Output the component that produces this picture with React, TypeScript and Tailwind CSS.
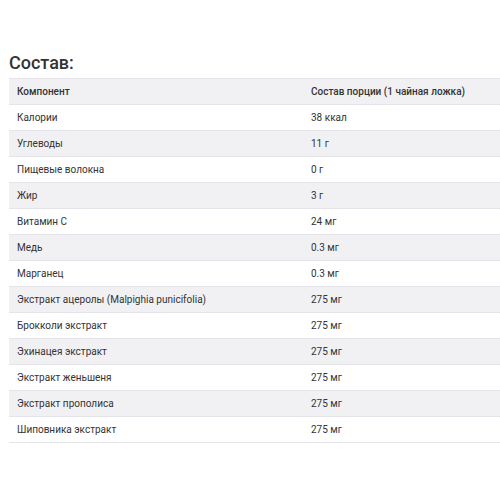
const rows: [string, string][] = [
  ['Калории', '38 ккал'],
  ['Углеводы', '11 г'],
  ['Пищевые волокна', '0 г'],
  ['Жир', '3 г'],
  ['Витамин С', '24 мг'],
  ['Медь', '0.3 мг'],
  ['Марганец', '0.3 мг'],
  ['Экстракт ацеролы (Malpighia punicifolia)', '275 мг'],
  ['Брокколи экстракт', '275 мг'],
  ['Эхинацея экстракт', '275 мг'],
  ['Экстракт женьшеня', '275 мг'],
  ['Экстракт прополиса', '275 мг'],
  ['Шиповника экстракт', '275 мг'],
]

export default function App() {
  return (
    <div className="w-[500px] h-[500px] bg-white overflow-hidden pl-[9px] pt-[51px] font-['Roboto',sans-serif] text-[#333]">
      <h2 className="text-[18px] leading-[24px] font-medium text-[#333] mb-[3px]">Состав:</h2>
      <table className="w-[520px] border-collapse text-[10px]">
        <thead>
          <tr className="bg-[#f1f1f4] border-y border-[#e4e4ea] h-[26px]">
            <th className="text-left font-medium pl-2 w-[294px]">Компонент</th>
            <th className="text-left font-medium pl-2">Состав порции (1 чайная ложка)</th>
          </tr>
        </thead>
        <tbody>
          {rows.map(([name, amount], i) => (
            <tr
              key={name}
              className={`h-[26px] border-b border-[#e4e4ea] ${i % 2 === 1 ? 'bg-[#f1f1f4]' : 'bg-white'}`}
            >
              <td className="pl-2">{name}</td>
              <td className="pl-2">{amount}</td>
            </tr>
          ))}
        </tbody>
      </table>
    </div>
  )
}
